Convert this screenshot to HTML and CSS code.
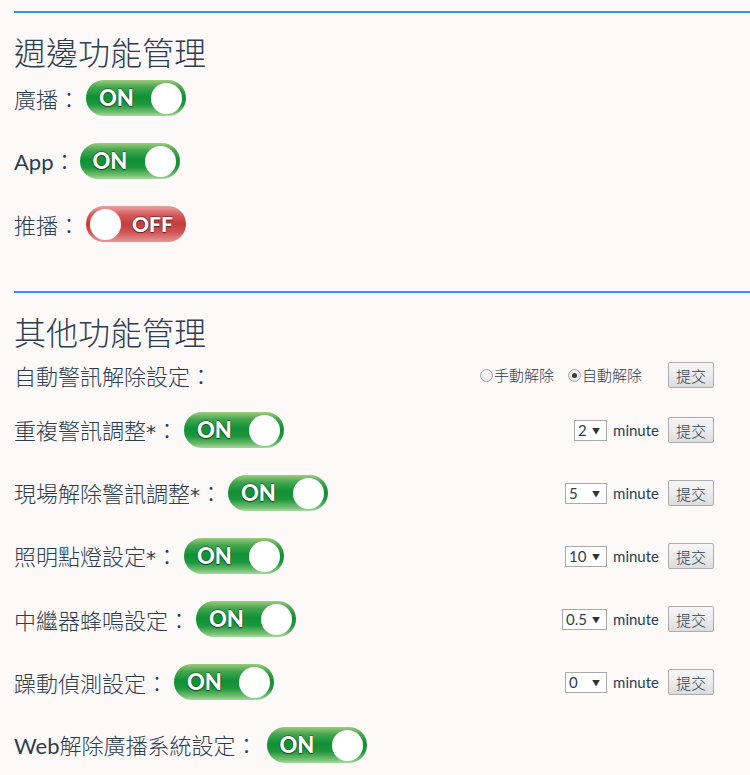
FILE: index.html
```html
<!DOCTYPE html>
<html lang="zh-Hant">
<head>
<meta charset="utf-8">
<title>功能管理</title>
<link rel="stylesheet" href="styles.css">
</head>
<body>
<div class="wrap">
  <div class="rule"></div>
  <h2 class="title">週邊功能管理</h2>
  <div class="row first">
    <span class="label">廣播：</span>
    <span class="toggle on"><span class="txt">ON</span><span class="knob"></span></span>
  </div>
  <div class="row">
    <span class="label"><span class="lat">App</span>：</span>
    <span class="toggle on app"><span class="txt">ON</span><span class="knob"></span></span>
  </div>
  <div class="row">
    <span class="label">推播：</span>
    <span class="toggle off"><span class="knob"></span><span class="txt">OFF</span></span>
  </div>

  <div class="rule second"></div>
  <h2 class="title">其他功能管理</h2>
  <div class="row auto">
    <span class="label">自動警訊解除設定：</span>
    <span class="ctrls">
      <span class="radio"></span><span class="rtext">手動解除</span>
      <span class="radio checked"></span><span class="rtext">自動解除</span>
      <span class="btn btn-wide">提交</span>
    </span>
  </div>
  <div class="row after-auto">
    <span class="label">重複警訊調整<span class="ast">*</span>：</span>
    <span class="toggle on"><span class="txt">ON</span><span class="knob"></span></span>
    <span class="ctrls">
      <span class="sel w33"><span class="val">2</span><span class="arr">▼</span></span>
      <span class="unit">minute</span>
      <span class="btn">提交</span>
    </span>
  </div>
  <div class="row">
    <span class="label">現場解除警訊調整<span class="ast">*</span>：</span>
    <span class="toggle on"><span class="txt">ON</span><span class="knob"></span></span>
    <span class="ctrls">
      <span class="sel w42"><span class="val">5</span><span class="arr">▼</span></span>
      <span class="unit">minute</span>
      <span class="btn">提交</span>
    </span>
  </div>
  <div class="row">
    <span class="label">照明點燈設定<span class="ast">*</span>：</span>
    <span class="toggle on"><span class="txt">ON</span><span class="knob"></span></span>
    <span class="ctrls">
      <span class="sel w42"><span class="val">10</span><span class="arr">▼</span></span>
      <span class="unit">minute</span>
      <span class="btn">提交</span>
    </span>
  </div>
  <div class="row">
    <span class="label">中繼器蜂鳴設定：</span>
    <span class="toggle on"><span class="txt">ON</span><span class="knob"></span></span>
    <span class="ctrls">
      <span class="sel w45"><span class="val">0.5</span><span class="arr">▼</span></span>
      <span class="unit">minute</span>
      <span class="btn">提交</span>
    </span>
  </div>
  <div class="row">
    <span class="label">躁動偵測設定：</span>
    <span class="toggle on"><span class="txt">ON</span><span class="knob"></span></span>
    <span class="ctrls">
      <span class="sel w42"><span class="val">0</span><span class="arr">▼</span></span>
      <span class="unit">minute</span>
      <span class="btn">提交</span>
    </span>
  </div>
  <div class="row">
    <span class="label"><span class="lat">Web</span>解除廣播系統設定：</span>
    <span class="toggle on web"><span class="txt">ON</span><span class="knob"></span></span>
  </div>
</div>
</body>
</html>
```
FILE: styles.css
```css
html, body {
  margin: 0;
  padding: 0;
  background: #fdf9f8;
}
body {
  font-family: Lato, "Noto Sans CJK TC", sans-serif;
  color: #2c3e50;
  overflow: hidden;
}
.wrap {
  display: flex;
  flex-direction: column;
  padding-left: 14px;
  height: 775px;
}
.rule {
  height: 2px;
  background: #3498db;
  margin-top: 11px;
  flex: none;
}
.rule.second {
  margin-top: 49px;
}
.title {
  margin: 21px 0 0 0;
  font-size: 32px;
  font-weight: 300;
  line-height: 35px;
  height: 35px;
  font-family: "Noto Sans CJK TC", sans-serif;
}
.row {
  display: flex;
  align-items: center;
  height: 36px;
  margin-top: 27px;
  padding-right: 36px;
  flex: none;
}
.row.first {
  margin-top: 11px;
}
.row.auto {
  height: 26px;
  margin-top: 13px;
}
.row.after-auto {
  margin-top: 24px;
}
.label {
  font-family: "Noto Sans CJK TC", sans-serif;
  font-size: 22px;
  font-weight: 300;
  line-height: 26px;
  white-space: nowrap;
}
.lat {
  font-family: Lato, sans-serif;
  font-weight: 400;
}
.ast {
  font-family: "DejaVu Sans", sans-serif;
  font-size: 20px;
  font-weight: 400;
}
.toggle {
  margin-left: 6px;
  width: 100px;
  height: 36px;
  border-radius: 18px;
  box-sizing: border-box;
  padding: 0 3px;
  display: flex;
  align-items: center;
  flex: none;
}
.toggle.app {
  margin-left: 4px;
}
.toggle.web {
  margin-left: 9px;
}
.toggle.on {
  background: linear-gradient(to bottom, #9ccc7c 0%, #45a64f 20%, #0f9136 46%, #1d963c 68%, #76bf72 90%, #a6d9a0 100%);
}
.toggle.off {
  background: linear-gradient(to bottom, #eca0a0 0%, #d45a5a 25%, #c53c3c 50%, #cf5252 72%, #e59797 100%);
}
.knob {
  width: 31px;
  height: 31px;
  border-radius: 50%;
  background: #fff;
  flex: none;
}
.toggle.on .knob {
  margin-left: auto;
  margin-right: 1px;
}
.toggle.off .knob {
  margin-left: 1px;
}
.txt {
  color: #fff;
  font-family: Lato, sans-serif;
  font-weight: 900;
  font-size: 22px;
  line-height: 36px;
  text-shadow: 0 0 1px #0a4a1a, 0 1px 1px rgba(0, 0, 0, 0.6), 0 -1px 0 rgba(0, 60, 20, 0.4);
}
.toggle.on .txt {
  margin-left: 10px;
}
.toggle.off .txt {
  margin-left: 11px;
  font-size: 21px;
  text-shadow: 0 0 1px #6a1010, 0 1px 1px rgba(0, 0, 0, 0.55), 0 -1px 0 rgba(90, 10, 10, 0.4);
}
.ctrls {
  margin-left: auto;
  display: flex;
  align-items: center;
  font-size: 15px;
  white-space: nowrap;
}
.radio {
  width: 11px;
  height: 11px;
  border-radius: 50%;
  border: 1px solid #a6a6a6;
  background: radial-gradient(circle at 50% 40%, #fdfdfd 0%, #e6e6e6 70%, #d4d4d4 100%);
  position: relative;
  flex: none;
}
.radio.checked::after {
  content: "";
  position: absolute;
  left: 3px;
  top: 3px;
  width: 5px;
  height: 5px;
  border-radius: 50%;
  background: #3a3a3a;
}
.rtext {
  margin-left: 1px;
  margin-right: 14px;
  line-height: 20px;
  font-weight: 300;
}
.rtext + .btn,
.btn-wide {
  margin-left: 12px;
}
.btn {
  width: 46px;
  height: 26px;
  box-sizing: border-box;
  border: 1px solid #acacac;
  border-radius: 2px;
  background: linear-gradient(to bottom, #f6f6f6 0%, #ececec 50%, #dcdcdc 100%);
  display: flex;
  align-items: center;
  justify-content: center;
  font-size: 15px;
  font-weight: 300;
  color: #2c3e50;
  flex: none;
}
.sel {
  height: 21px;
  box-sizing: border-box;
  border: 1px solid #a9a9a9;
  background: #fff;
  display: flex;
  align-items: center;
  padding: 0 6px 0 3px;
  font-size: 15px;
  color: #2c3e50;
  flex: none;
}
.sel .val {
  line-height: 19px;
}
.sel .arr {
  margin-left: auto;
  font-size: 8px;
  color: #333;
}
.w33 { width: 33px; }
.w42 { width: 42px; }
.w45 { width: 45px; }
.unit {
  margin: 0 9px 0 6px;
  line-height: 20px;
}
```
